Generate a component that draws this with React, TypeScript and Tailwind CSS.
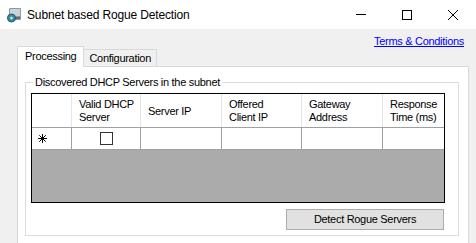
import React from 'react'

const columns = [
  { label: ['Valid DHCP', 'Server'], w: 'w-[69px]' },
  { label: ['Server IP'], w: 'w-[81px]' },
  { label: ['Offered', 'Client IP'], w: 'w-[80px]' },
  { label: ['Gateway', 'Address'], w: 'w-[81px]' },
  { label: ['Response', 'Time (ms)'], w: 'w-[70px]' },
]

function AppIcon() {
  return (
    <svg width="16" height="16" viewBox="0 0 16 16">
      <rect x="3" y="1" width="12" height="12" rx="1" fill="#8a9aa6" />
      <rect x="4" y="2" width="10" height="7" fill="#c9d3da" />
      <rect x="4" y="10" width="10" height="2" fill="#5d6c76" />
      <circle cx="5.5" cy="11" r="4" fill="#3b8fa3" stroke="#1f5563" strokeWidth="1" />
      <circle cx="5.5" cy="11" r="1.2" fill="#dff2f6" />
    </svg>
  )
}

function NewRowGlyph() {
  return (
    <svg width="9" height="9" viewBox="0 0 9 9" stroke="#000" strokeWidth="1">
      <line x1="4.5" y1="0" x2="4.5" y2="9" />
      <line x1="0" y1="4.5" x2="9" y2="4.5" />
      <line x1="1.3" y1="1.3" x2="7.7" y2="7.7" />
      <line x1="7.7" y1="1.3" x2="1.3" y2="7.7" />
    </svg>
  )
}

export default function App() {
  return (
    <div className="w-[476px] h-[243px] overflow-hidden flex flex-col bg-[#f0f0f0] text-black text-[11px] tracking-[-0.3px] font-['Liberation_Sans',Arial,sans-serif]">
      {/* title bar */}
      <div className="h-[29px] bg-white flex items-center shrink-0">
        <div className="ml-[6px] mt-[1px]">
          <AppIcon />
        </div>
        <span className="ml-[5px] text-[12px] tracking-[-0.15px] text-black">Subnet based Rogue Detection</span>
        <div className="ml-auto flex items-center h-full">
          <div className="w-[46px] h-full flex items-center justify-center">
            <div className="w-[10px] h-px bg-black" />
          </div>
          <div className="w-[46px] h-full flex items-center justify-center">
            <div className="w-[10px] h-[10px] border border-black" />
          </div>
          <div className="w-[46px] h-full flex items-center justify-center">
            <svg width="10" height="10" viewBox="0 0 10 10" stroke="#000" strokeWidth="1">
              <line x1="0" y1="0" x2="10" y2="10" />
              <line x1="10" y1="0" x2="0" y2="10" />
            </svg>
          </div>
        </div>
      </div>

      {/* body */}
      <div className="flex-1 flex flex-col pl-[17px] pr-[7px]">
        <div className="flex justify-end mt-[6px] h-[11px] pr-[5px]">
          <a href="#" className="text-[#0000ff] underline leading-[13px]">Terms &amp; Conditions</a>
        </div>

        {/* tabs */}
        <div className="flex items-end h-[20px] relative z-10">
          <div className="h-[21px] -mb-px bg-white border border-[#d9d9d9] border-b-0 px-[7px] pt-[3px] leading-[13px]">Processing</div>
          <div className="h-[17px] bg-[#f0f0f0] border border-[#d9d9d9] border-l-0 border-b-0 px-[5px] pt-[2px] leading-[13px]">Configuration</div>
        </div>

        {/* tab page */}
        <div className="flex-1 bg-white border border-[#d9d9d9] border-b-0 flex flex-col">
          <fieldset className="mt-[9px] ml-[7px] mr-[9px] border border-[#dcdcdc] pl-[5px] pr-[13px] pb-[5px] flex flex-col">
            <legend className="ml-[2px] px-[2px] leading-[13px]">Discovered DHCP Servers in the subnet</legend>

            {/* data grid */}
            <div className="mt-[4px] w-[414px] h-[110px] border border-black bg-[#ababab] overflow-hidden flex flex-col">
              <div className="flex h-[33px] bg-white shrink-0">
                <div className="w-[40px] shrink-0 border-r border-[#e5e5e5]" />
                {columns.map((c) => (
                  <div key={c.label[0]} className={`${c.w} shrink-0 border-r border-[#e5e5e5] pl-[7px] pt-[1px] flex flex-col justify-center leading-[13px]`}>
                    {c.label.map((l) => (
                      <span key={l}>{l}</span>
                    ))}
                  </div>
                ))}
              </div>
              <div className="flex h-[23px] shrink-0 border-t border-[#a0a0a0]">
                <div className="w-[40px] shrink-0 bg-white border-r border-b border-[#a0a0a0] flex items-center pl-[6px]">
                  <NewRowGlyph />
                </div>
                <div className="w-[69px] shrink-0 bg-white border-r border-b border-[#a0a0a0] flex items-center justify-center">
                  <div className="w-[13px] h-[13px] border border-[#333]" />
                </div>
                <div className="w-[81px] shrink-0 bg-white border-r border-b border-[#a0a0a0]" />
                <div className="w-[80px] shrink-0 bg-white border-r border-b border-[#a0a0a0]" />
                <div className="w-[81px] shrink-0 bg-white border-r border-b border-[#a0a0a0]" />
                <div className="w-[70px] shrink-0 bg-white border-b border-[#a0a0a0]" />
              </div>
            </div>

            <button className="mt-[6px] self-end mr-[1px] w-[158px] h-[21px] bg-[#e1e1e1] border border-[#adadad] leading-[13px]">
              Detect Rogue Servers
            </button>
          </fieldset>
        </div>
      </div>
    </div>
  )
}
